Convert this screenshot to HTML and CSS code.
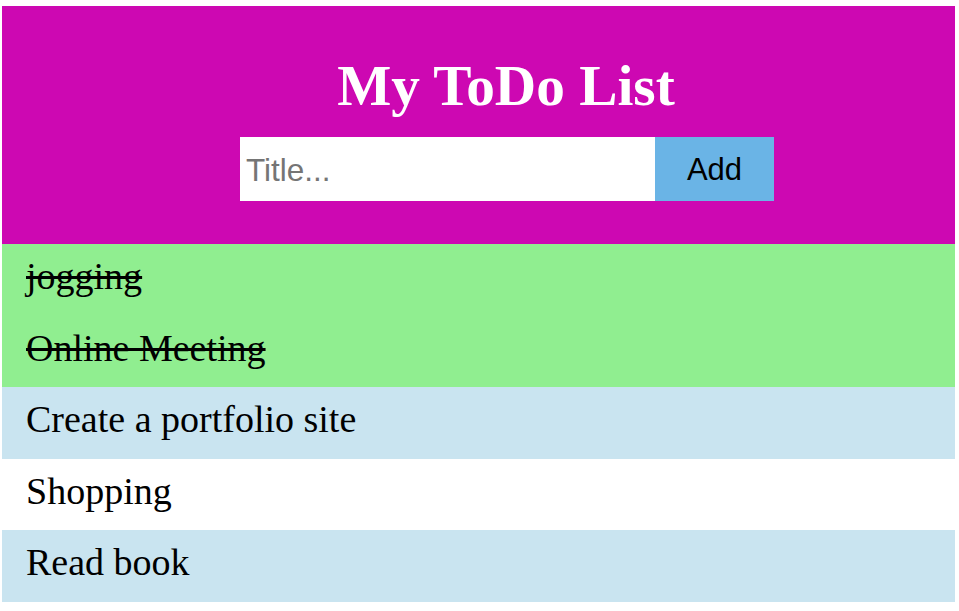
FILE: index.html
```html
<!DOCTYPE html>
<html lang="en">
<head>
<meta charset="utf-8">
<title>My ToDo List</title>
<link rel="stylesheet" href="styles.css">
</head>
<body>
<div class="app">
  <header class="header">
    <h2 class="title">My ToDo List</h2>
    <form class="add-form">
      <input class="title-input" type="text" placeholder="Title...">
      <button class="add-btn" type="button">Add</button>
    </form>
  </header>
  <ul class="todo-list">
    <li class="item done">jogging</li>
    <li class="item done">Online Meeting</li>
    <li class="item odd">Create a portfolio site</li>
    <li class="item even">Shopping</li>
    <li class="item odd">Read book</li>
  </ul>
</div>
</body>
</html>
```
FILE: styles.css
```css
html, body {
  margin: 0;
  padding: 0;
  background: #ffffff;
}

.app {
  padding: 6px 4px 0 2px;
  font-family: "Liberation Serif", "Times New Roman", serif;
}

.header {
  background: #cd08b2;
  padding: 47.6px 0 43px 55px;
  display: flex;
  flex-direction: column;
  align-items: center;
}

.title {
  margin: 0 0 19.4px;
  font-size: 57.3px;
  line-height: 64px;
  font-weight: bold;
  color: #ffffff;
}

.add-form {
  display: flex;
  margin: 0 0 0 2px;
}

.title-input {
  width: 415px;
  height: 64px;
  box-sizing: border-box;
  border: none;
  outline: none;
  margin: 0;
  padding: 3px 6px 0;
  font-family: "Liberation Sans", Arial, sans-serif;
  font-size: 31.5px;
  color: #000;
  background: #fff;
}

.title-input::placeholder {
  color: #757575;
}

.add-btn {
  width: 119px;
  height: 64px;
  border: none;
  margin: 0;
  padding: 3px 0 0;
  background: #6ab4e6;
  color: #000;
  font-family: "Liberation Sans", Arial, sans-serif;
  font-size: 31px;
}

.todo-list {
  list-style: none;
  margin: 0;
  padding: 0;
}

.item {
  padding: 11px 24px 18.6px;
  font-size: 38px;
  line-height: 42px;
  color: #000;
}

.item.done {
  background: #90ee90;
  text-decoration: line-through;
}

.item.odd {
  background: #c9e4f0;
}

.item.even {
  background: #ffffff;
}
```
